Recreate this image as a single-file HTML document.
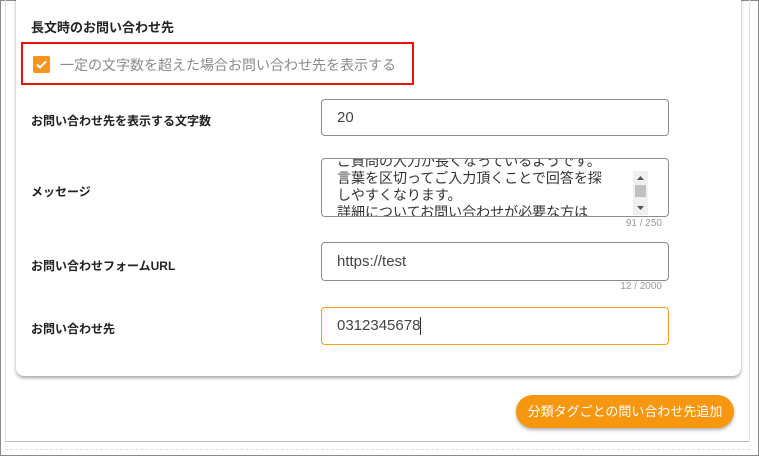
<!DOCTYPE html>
<html><head><meta charset="utf-8"><style>
*{box-sizing:border-box;margin:0;padding:0}
body{width:759px;height:456px;background:#fff;font-family:"Liberation Sans","Noto Sans CJK JP",sans-serif;position:relative;overflow:hidden}
.abs{position:absolute}
.lbl{position:absolute;left:31px;font-size:12px;font-weight:bold;color:#222}
.inp{position:absolute;left:321px;width:348px;border:1px solid #8c8c8c;border-radius:4px;font-size:15px;color:#444;padding-left:15px}
.cnt{position:absolute;right:97px;font-size:10px;color:#999}
</style></head><body>
<div class="abs" style="left:0;top:0;width:759px;height:456px;border:1px solid #8a8a8a"></div>
<div class="abs" style="left:5px;top:0;width:1px;height:442px;background:#ddd"></div>
<div class="abs" style="left:5px;top:441px;width:745px;height:1px;background:#bbb"></div>
<div class="abs" style="left:5px;top:449px;width:745px;border-top:1px dashed #ddd"></div>
<div class="abs" style="left:749px;top:0;width:1px;height:442px;background:#e4e4e4"></div>
<div class="abs" style="left:16px;top:-10px;width:725px;height:386px;background:#fff;border-radius:8px;box-shadow:0 2px 3px rgba(0,0,0,.35)"></div>
<div class="abs" style="left:31px;top:17px;font-size:13px;font-weight:bold;color:#222">長文時のお問い合わせ先</div>
<div class="abs" style="left:21px;top:42px;width:393px;height:43px;border:2px solid #e81010"></div>
<div class="abs" style="left:33px;top:56px;width:17px;height:17px;background:#f7941d;border-radius:2px"><svg width="17" height="17"><path d="M4 8.5l3 3 6-6" stroke="#fff" stroke-width="2" fill="none"/></svg></div>
<div class="abs" style="left:60px;top:55px;font-size:14px;color:#8a8a8a">一定の文字数を超えた場合お問い合わせ先を表示する</div>
<div class="lbl" style="top:112px">お問い合わせ先を表示する文字数</div>
<div class="inp" style="top:99px;height:37px;line-height:35px">20</div>
<div class="lbl" style="top:183px">メッセージ</div>
<div class="inp" style="top:158px;height:59px;overflow:hidden;font-size:14px;line-height:17px;color:#333;padding-top:0">
<div style="margin-top:-6px">ご質問の入力が長くなっているようです。<br>言葉を区切ってご入力頂くことで回答を探<br>しやすくなります。<br>詳細についてお問い合わせが必要な方は</div>
<div class="abs" style="right:20px;top:12px;width:15px;height:44px;background:#f0f0f0"><svg width="15" height="44" style="position:absolute;left:0;top:0"><path d="M4 9h7l-3.5-4z M4 35h7l-3.5 4z" fill="#555"/><rect x="2" y="14" width="11" height="12" fill="#c0c0c0"/></svg></div>
</div>
<div class="cnt" style="top:218px">91 / 250</div>
<div class="lbl" style="top:257px">お問い合わせフォームURL</div>
<div class="inp" style="top:242px;height:39px;line-height:37px">https://test</div>
<div class="cnt" style="top:281px">12 / 2000</div>
<div class="lbl" style="top:320px">お問い合わせ先</div>
<div class="inp" style="top:307px;height:38px;line-height:36px;border-color:#f7a21d">0312345678<span style="display:inline-block;width:1px;height:18px;background:#333;vertical-align:middle"></span></div>
<div class="abs" style="left:516px;top:395px;width:218px;height:33px;background:#f7960f;border-radius:17px;color:#fff;font-size:13px;text-align:center;line-height:33px;box-shadow:0 2px 3px rgba(0,0,0,.3)">分類タグごとの問い合わせ先追加</div>
</body></html>
